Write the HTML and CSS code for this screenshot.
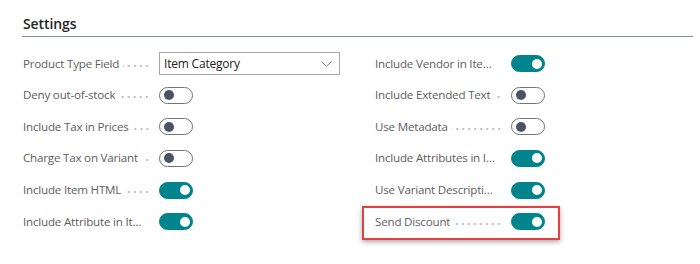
FILE: index.html
```html
<!DOCTYPE html>
<html lang="en">
<head>
<meta charset="utf-8">
<title>Settings</title>
<link rel="stylesheet" href="styles.css">
</head>
<body>
<div class="page">
  <h2 class="title">Settings</h2>
  <div class="grid">
    <div class="field">
      <div class="label"><span class="label-text">Product Type Field</span><span class="leader"></span></div>
      <div class="select"><span class="select-value">Item Category</span>
        <svg class="chev" width="11" height="6" viewBox="0 0 11 6"><path d="M0.5 0.5 L5.5 5.3 L10.5 0.5" fill="none" stroke="#7a7a7a" stroke-width="1"/></svg>
      </div>
    </div>
    <div class="field">
      <div class="label"><span class="label-text">Deny out-of-stock</span><span class="leader"></span></div>
      <span class="toggle"></span>
    </div>
    <div class="field">
      <div class="label"><span class="label-text">Include Tax in Prices</span><span class="leader"></span></div>
      <span class="toggle"></span>
    </div>
    <div class="field">
      <div class="label"><span class="label-text">Charge Tax on Variant</span><span class="leader"></span></div>
      <span class="toggle"></span>
    </div>
    <div class="field">
      <div class="label"><span class="label-text">Include Item HTML</span><span class="leader"></span></div>
      <span class="toggle on"></span>
    </div>
    <div class="field">
      <div class="label"><span class="label-text">Include Attribute in Item Description</span><span class="leader"></span></div>
      <span class="toggle on"></span>
    </div>

    <div class="field">
      <div class="label"><span class="label-text">Include Vendor in Item Description</span><span class="leader"></span></div>
      <span class="toggle on"></span>
    </div>
    <div class="field">
      <div class="label"><span class="label-text">Include Extended Text</span><span class="leader"></span></div>
      <span class="toggle"></span>
    </div>
    <div class="field">
      <div class="label"><span class="label-text">Use Metadata</span><span class="leader"></span></div>
      <span class="toggle"></span>
    </div>
    <div class="field">
      <div class="label"><span class="label-text">Include Attributes in Item Description</span><span class="leader"></span></div>
      <span class="toggle on"></span>
    </div>
    <div class="field">
      <div class="label"><span class="label-text">Use Variant Description</span><span class="leader"></span></div>
      <span class="toggle on"></span>
    </div>
    <div class="field marked">
      <div class="label"><span class="label-text">Send Discount</span><span class="leader"></span></div>
      <span class="toggle on"></span>
    </div>
  </div>
</div>
</body>
</html>
```
FILE: styles.css
```css
html, body {
  margin: 0;
  padding: 0;
  background: #ffffff;
}
body {
  font-family: "Open Sans", "Noto Sans", sans-serif;
  font-size: 11.6px;
  letter-spacing: -0.2px;
  color: #5e5e5e;
}
.page {
  padding: 14px 7px 26px 22px;
}
.title {
  margin: 0;
  font-size: 14px;
  font-weight: 600;
  letter-spacing: -0.1px;
  line-height: 20px;
  color: #262626;
  padding: 0 0 2px 1px;
  border-bottom: 1px solid #8d959c;
}
.grid {
  margin-top: 10.7px;
  display: grid;
  grid-template-columns: 352px 1fr;
  grid-template-rows: repeat(6, 31.65px);
  grid-auto-flow: column;
}
.field {
  position: relative;
  display: flex;
  align-items: center;
  width: max-content;
}
.label {
  width: 137px;
  box-sizing: border-box;
  padding-left: 1px;
  padding-right: 9px;
  display: flex;
  align-items: center;
}
.label-text {
  white-space: nowrap;
  overflow: hidden;
  text-overflow: ellipsis;
  max-width: 121px;
  line-height: 18px;
}
.leader {
  flex: 1;
  min-width: 2px;
  height: 2px;
  margin-top: 4px;
  margin-left: 4px;
  background-image: radial-gradient(circle, #c0c0c0 0.75px, transparent 0.95px);
  background-size: 6px 2px;
  background-repeat: repeat-x;
  background-position: right center;
}
.select {
  width: 181px;
  height: 23px;
  box-sizing: border-box;
  border: 1px solid #a6a6a6;
  display: flex;
  align-items: center;
  justify-content: space-between;
  padding: 0 7px 0 4px;
  color: #212121;
  font-size: 12px;
}
.chev {
  display: block;
  margin-top: 1px;
}
.toggle {
  position: relative;
  display: block;
  width: 34px;
  height: 17px;
  box-sizing: border-box;
  border: 1px solid #727272;
  border-radius: 9px;
  background: #ffffff;
}
.toggle::before {
  content: "";
  position: absolute;
  top: 2.5px;
  left: 3.5px;
  width: 10px;
  height: 10px;
  border-radius: 50%;
  background: #4b5366;
}
.toggle.on {
  background: #00848b;
  border-color: #00848b;
}
.toggle.on::before {
  left: auto;
  right: 2.5px;
  background: #ffffff;
}
.marked::after {
  content: "";
  position: absolute;
  left: -12px;
  right: -15px;
  top: 0;
  bottom: -2px;
  border: 2px solid #e5403f;
  box-shadow: 0 2px 5px rgba(0, 0, 0, 0.35);
  pointer-events: none;
}
```
